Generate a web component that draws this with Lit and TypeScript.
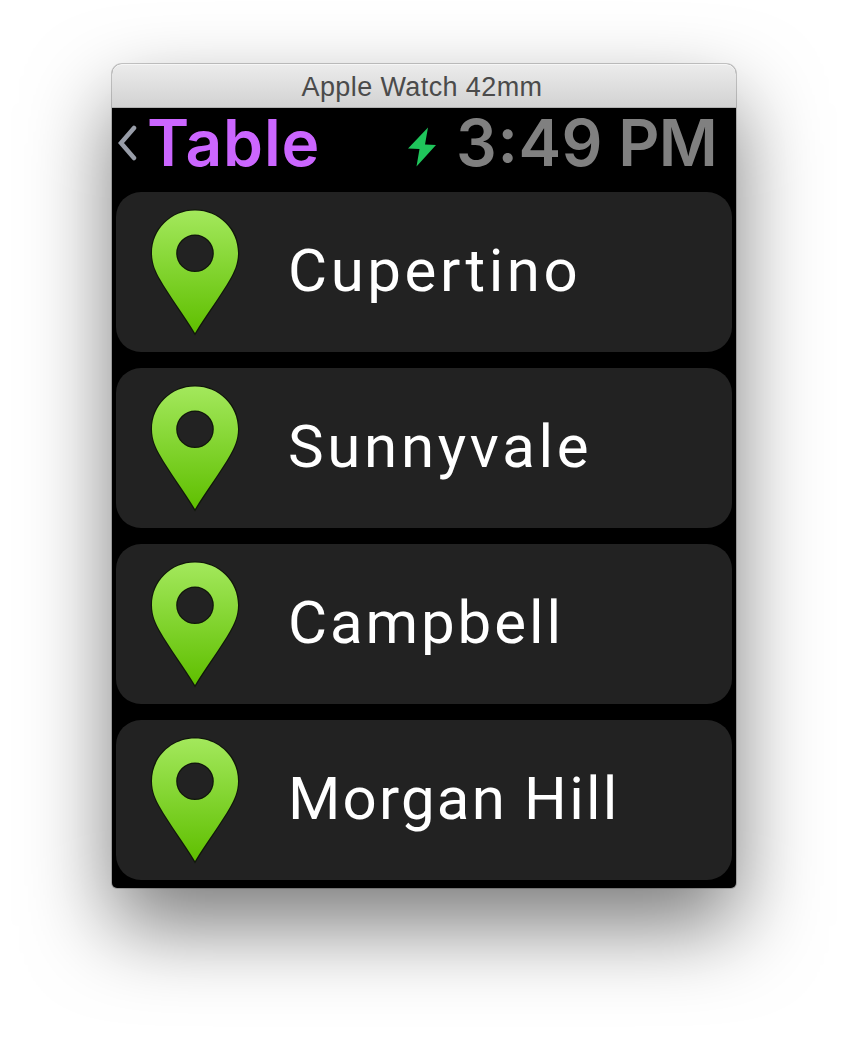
import { LitElement, html, css } from "lit";
import { customElement, property } from "lit/decorators.js";

@customElement("place-row")
class PlaceRow extends LitElement {
  @property() name = "";
  @property({ type: Number }) spacing = 0;

  static styles = css`
    :host {
      display: flex;
      align-items: center;
      height: 160px;
      border-radius: 25px;
      background: #222;
      color: #fff;
      font-family: Roboto, Inter, sans-serif;
      font-size: 60px;
      font-weight: 400;
      line-height: 80px;
    }
    .pin {
      flex: none;
      width: 94px;
      height: 132px;
      margin: 0 46px 0 32px;
    }
    .name {
      padding-bottom: 2px;
      white-space: nowrap;
    }
  `;

  render() {
    return html`
      <svg class="pin" viewBox="0 0 94 132">
        <defs>
          <linearGradient id="g" x1="0" y1="0" x2="0" y2="1">
            <stop offset="0" stop-color="#a3e85c" />
            <stop offset="1" stop-color="#5fbf00" />
          </linearGradient>
        </defs>
        <path
          fill="url(#g)"
          stroke="#10170a"
          stroke-width="2.500"
          paint-order="stroke"
          fill-rule="evenodd"
          d="M47 4.500C23 4.500 4 23.500 4 47C4 58 8 66 12 73C21 89 37 110 47 127C57 110 73 89 82 73C86 66 90 58 90 47C90 23.500 71 4.500 47 4.500ZM47 28.500A18.800 18.800 0 1 1 47 66.100A18.800 18.800 0 1 1 47 28.500Z"
        />
      </svg>
      <span class="name" style="letter-spacing:${this.spacing}px">${this.name}</span>
    `;
  }
}

@customElement("app-root")
class AppRoot extends LitElement {
  static styles = css`
    :host {
      display: flex;
      justify-content: center;
      box-sizing: border-box;
      height: 1048px;
      padding-top: 64px;
      background: #fff;
      overflow: hidden;
    }
    .window {
      width: 624px;
      height: 824px;
      border-radius: 10px 10px 5px 5px;
      background: #000;
      box-shadow: 0 0 0 1px rgba(0, 0, 0, 0.2), 0 38px 84px rgba(0, 0, 0, 0.52);
    }
    .titlebar {
      box-sizing: border-box;
      height: 44px;
      border-radius: 10px 10px 0 0;
      border-bottom: 1px solid #b1b1b1;
      background: linear-gradient(#ececec, #d2d2d2);
      box-shadow: inset 0 1px #f6f6f6;
      color: #4b4b4b;
      font: 27px/46px "Liberation Sans", sans-serif;
      text-align: center;
      padding-right: 4px;
      letter-spacing: 0.4px;
    }
    .status {
      display: flex;
      align-items: center;
      height: 84px;
      box-sizing: border-box;
      padding: 0 19px 14px 5px;
      font-family: Inter, Roboto, sans-serif;
      font-size: 64px;
      font-weight: 600;
      line-height: 70px;
      white-space: nowrap;
    }
    .back {
      flex: none;
      width: 20px;
      height: 38px;
    }
    .title {
      width: 262px;
      margin-left: 10px;
      color: #cb66ff;
      letter-spacing: 0.9px;
    }
    .bolt {
      flex: none;
      width: 30px;
      height: 40px;
      margin: 7px auto 0 -2px;
    }
    .time {
      color: #808080;
      font-weight: 600;
      font-size: 64px;
    }
    .clock {
      letter-spacing: 0.6px;
    }
    .meridiem {
      margin-left: -1px;
      letter-spacing: -0.8px;
    }
    .colon {
      position: relative;
      top: -4px;
    }
    .rows {
      display: grid;
      gap: 16px;
      padding: 0 4px;
    }
  `;

  places = [
    { name: "Cupertino", spacing: 3.6 },
    { name: "Sunnyvale", spacing: 3.7 },
    { name: "Campbell", spacing: 2.9 },
    { name: "Morgan Hill", spacing: 2.2 },
  ];

  render() {
    return html`
      <div class="window">
        <div class="titlebar">Apple Watch 42mm</div>
        <div class="status">
          <svg class="back" viewBox="0 0 20 38">
            <path d="M17 4L4 19L17 34" fill="none" stroke="#989da8" stroke-width="4.500" stroke-linecap="round" />
          </svg>
          <span class="title">Table</span>
          <svg class="bolt" viewBox="0 0 30 40">
            <path d="M21 0.500L1 21.500L12.500 22L9.500 39.500L29 18L18 17.500Z" fill="#1fc55b" />
          </svg>
          <span class="time"><span class="clock">3<span class="colon">:</span>49</span> <span class="meridiem">PM</span></span>
        </div>
        <div class="rows">
          ${this.places.map(
            (p) => html`<place-row .name=${p.name} .spacing=${p.spacing}></place-row>`
          )}
        </div>
      </div>
    `;
  }
}
